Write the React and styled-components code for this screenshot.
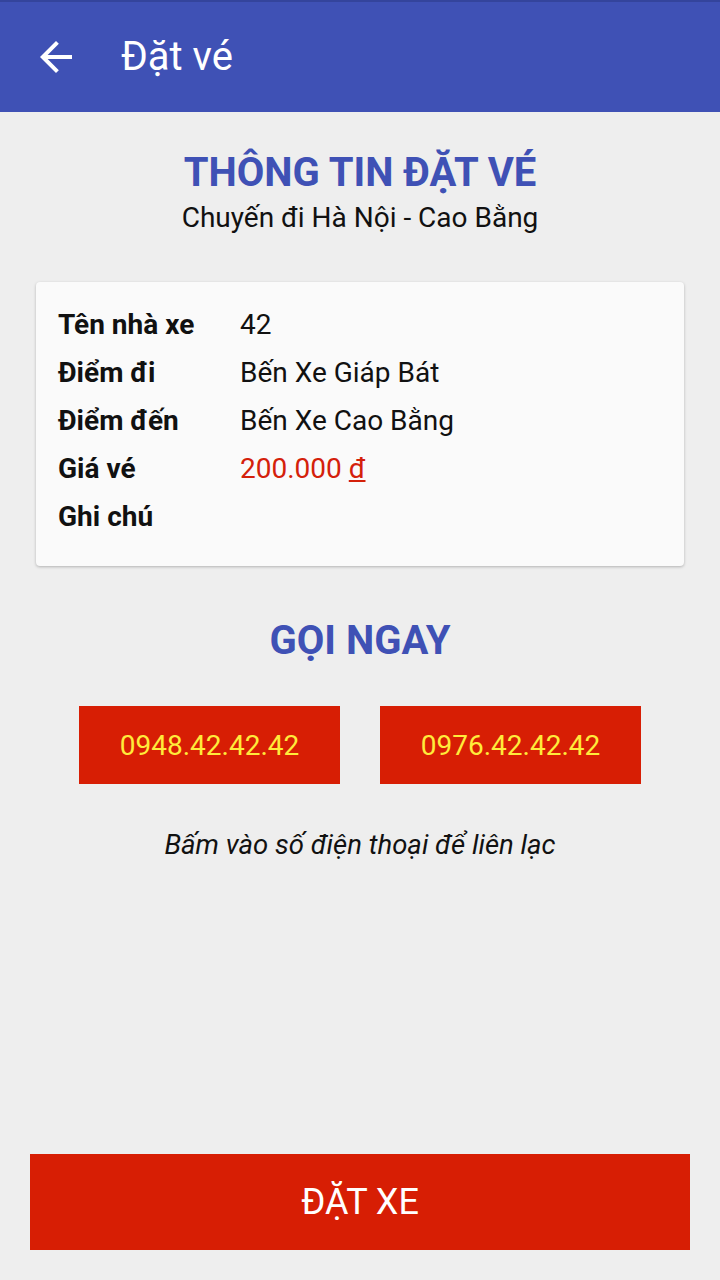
import React from 'react';
import styled, { createGlobalStyle } from 'styled-components';

const GlobalStyle = createGlobalStyle`
  html, body {
    margin: 0;
    padding: 0;
    background: #eeeeee;
    font-family: Roboto, "Noto Sans", "Liberation Sans", sans-serif;
  }
  * { box-sizing: border-box; }
`;

const Screen = styled.div`
  display: flex;
  flex-direction: column;
  min-height: 1280px;
  width: 720px;
  background: #eeeeee;
`;

const AppBar = styled.header`
  display: flex;
  align-items: center;
  height: 112px;
  padding-left: 32px;
  background: #3f51b5;
  border-top: 2px solid #34449c;
  color: #fff;
`;

const BackButton = styled.button`
  display: flex;
  align-items: center;
  justify-content: center;
  width: 48px;
  height: 48px;
  padding: 0;
  border: none;
  background: transparent;
  color: #fff;
`;

const BarTitle = styled.h1`
  margin: 0 0 0 41px;
  font-size: 40px;
  font-weight: 400;
  line-height: 48px;
`;

const Content = styled.main`
  display: flex;
  flex-direction: column;
  align-items: center;
  flex: 1;
  padding-top: 38px;
`;

const Heading = styled.h2`
  margin: 0;
  font-size: 40px;
  font-weight: 700;
  line-height: 46px;
  color: #3f51b5;
`;

const SubHeading = styled.div`
  font-size: 28px;
  line-height: 44px;
  color: #111;
`;

const Card = styled.section`
  align-self: stretch;
  margin: 42px 36px 0;
  padding: 18px 22px 26px;
  background: #fafafa;
  border-radius: 4px;
  box-shadow: 0 1px 3px rgba(0, 0, 0, 0.25);
`;

const Row = styled.div`
  display: flex;
  align-items: center;
  height: 48px;
  font-size: 28px;
`;

const Label = styled.div`
  width: 182px;
  font-weight: 700;
  color: #111;
`;

const Value = styled.div`
  color: ${(p) => (p.$price ? '#d4200a' : '#111')};
`;

const Currency = styled.span`
  text-decoration: underline;
`;

const CallTitle = styled.h3`
  margin: 51px 0 0;
  font-size: 40px;
  font-weight: 700;
  line-height: 48px;
  color: #3f51b5;
`;

const PhoneRow = styled.div`
  display: flex;
  gap: 40px;
  margin-top: 41px;
`;

const PhoneButton = styled.button`
  width: 261px;
  height: 78px;
  border: none;
  background: #d71e04;
  color: #ffeb3b;
  font-family: inherit;
  font-size: 28px;
`;

const Hint = styled.p`
  margin: 41px 0 0;
  font-size: 27.5px;
  font-style: italic;
  line-height: 40px;
  color: #111;
`;

const BookButton = styled.button`
  margin: 0 30px 30px;
  height: 96px;
  border: none;
  background: #d71e04;
  color: #fff;
  font-family: inherit;
  font-size: 36px;
`;

const rows = [
  { label: 'Tên nhà xe', value: '42' },
  { label: 'Điểm đi', value: 'Bến Xe Giáp Bát' },
  { label: 'Điểm đến', value: 'Bến Xe Cao Bằng' },
  { label: 'Giá vé', value: '200.000', price: true },
  { label: 'Ghi chú', value: '' },
];

export default function App() {
  return (
    <Screen>
      <GlobalStyle />
      <AppBar>
        <BackButton aria-label="Quay lại">
          <svg width="48" height="48" viewBox="0 0 24 24" fill="currentColor">
            <path d="M20 11H7.83l5.59-5.59L12 4l-8 8 8 8 1.41-1.41L7.83 13H20v-2z" />
          </svg>
        </BackButton>
        <BarTitle>Đặt vé</BarTitle>
      </AppBar>
      <Content>
        <Heading>THÔNG TIN ĐẶT VÉ</Heading>
        <SubHeading>Chuyến đi Hà Nội - Cao Bằng</SubHeading>
        <Card>
          {rows.map((r) => (
            <Row key={r.label}>
              <Label>{r.label}</Label>
              <Value $price={r.price}>
                {r.value}
                {r.price && <> <Currency>đ</Currency></>}
              </Value>
            </Row>
          ))}
        </Card>
        <CallTitle>GỌI NGAY</CallTitle>
        <PhoneRow>
          <PhoneButton>0948.42.42.42</PhoneButton>
          <PhoneButton>0976.42.42.42</PhoneButton>
        </PhoneRow>
        <Hint>Bấm vào số điện thoại để liên lạc</Hint>
      </Content>
      <BookButton>ĐẶT XE</BookButton>
    </Screen>
  );
}
